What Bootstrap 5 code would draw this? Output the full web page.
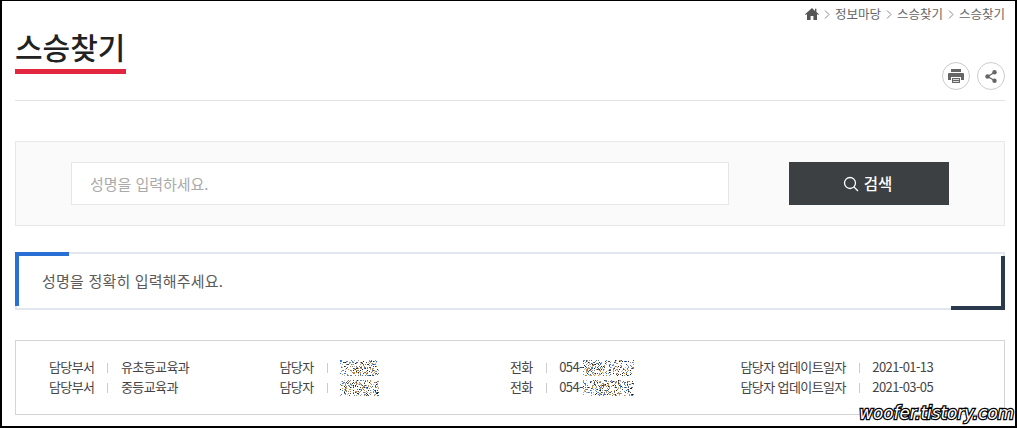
<!DOCTYPE html>
<html lang="ko">
<head>
<meta charset="utf-8">
<title>스승찾기</title>
<link href="https://cdn.jsdelivr.net/npm/bootstrap@5.3.0/dist/css/bootstrap.min.css" rel="stylesheet">
<style>
html,body{height:100%;overflow:hidden}
body{font-family:"Noto Sans CJK KR","Noto Sans",sans-serif;color:#444;background:#fff}
.frame{height:428px;border:solid #000;border-width:1px 2px 2px 2px;padding:0 10px 0 13px;position:relative;background:#fff}
.crumbs{height:25px;font-size:12.500px;color:#666;gap:5px;padding-top:1px}
.crumbs .sep{width:6px;height:9px}
.head{height:75px;border-bottom:1px solid #e3e3e3;margin-top:0}
.ttl{font-size:30px;font-weight:500;color:#222;line-height:40px;margin:0;padding-bottom:5px;width:111px;border-bottom:5px solid #e3263f;white-space:nowrap;height:48px}
.circ{width:28px;height:28px;border:1px solid #ccc;border-radius:50%;background:#fff;padding:0}
.tools{gap:7px;margin-top:36px}
.searchbox{margin-top:40px;height:85px;background:#fafafa;border:1px solid #e8e8e8;padding:20px 55px}
.nameinput{width:658px;height:43px;border:1px solid #e6e6e6;background:#fff;border-radius:0;padding:0 18px;font-size:15px;color:#333;box-shadow:none;letter-spacing:-.05px}
.nameinput::placeholder{color:#aaa;opacity:1}
.findbtn{width:160px;height:43px;background:#3c4043;color:#fff;border:0;border-radius:0;font-size:15.500px;font-weight:500;margin-left:60px;gap:5px;padding:0 3px 0 0}
.notice{margin-top:26px;height:58px;border:2px solid #e2e7ef;position:relative;padding-left:25px;font-size:15px;color:#5a5a5a;letter-spacing:.2px}
.cornerA{position:absolute;left:-2px;top:-2px;width:54px;height:54px;border-left:4px solid #2a6fd6;border-top:4px solid #2a6fd6}
.cornerB{position:absolute;right:-2px;bottom:-2px;width:54px;height:54px;border-right:4px solid #2a3a4c;border-bottom:4px solid #2a3a4c}
.infobox{margin-top:30px;height:75px;border:1px solid #d4d4d4;padding:16px 0 0 33px;font-size:13px;color:#444;letter-spacing:-.6px}
.inforow{height:20px;line-height:20px}
.cell{width:230.500px;white-space:nowrap}
.cell i{font-style:normal;display:inline-block;width:1px;height:10px;background:#ccc;margin:0 12.500px 0 13px;vertical-align:-1px}
.fuzz{display:inline-block;vertical-align:-4px}
.wm{position:absolute;right:1px;bottom:2px;font-family:"DejaVu Sans",sans-serif;font-style:italic;font-size:16.800px;font-weight:400;color:#fff;-webkit-text-stroke:2.500px #000;paint-order:stroke fill;line-height:22px}
</style>
</head>
<body>
<div class="frame">
  <nav class="crumbs d-flex align-items-center justify-content-end">
    <svg width="14" height="12" viewBox="0 0 14 12"><path fill="#555" d="M7 0 0 6.200l.8.9L2 6.100V12h3.600V8h2.800v4H12V6.100l1.200 1 .8-.9-2.600-2.300V.8H10v2.100z"/></svg>
    <svg class="sep" viewBox="0 0 6 9"><path d="M1 .5 5 4.500 1 8.500" fill="none" stroke="#888"/></svg>
    <span>정보마당</span>
    <svg class="sep" viewBox="0 0 6 9"><path d="M1 .5 5 4.500 1 8.500" fill="none" stroke="#888"/></svg>
    <span>스승찾기</span>
    <svg class="sep" viewBox="0 0 6 9"><path d="M1 .5 5 4.500 1 8.500" fill="none" stroke="#888"/></svg>
    <span>스승찾기</span>
  </nav>
  <div class="head d-flex justify-content-between align-items-start">
    <h1 class="ttl">스승찾기</h1>
    <div class="tools d-flex">
      <button class="circ d-flex align-items-center justify-content-center" aria-label="인쇄"><svg width="16" height="14" viewBox="0 0 16 14"><path fill="#666" d="M3 0h10v3H3zM1 4h14a1 1 0 0 1 1 1v6h-3V8H3v3H0V5a1 1 0 0 1 1-1zM4 9h8v5H4zm1 1.200v.8h6v-.8zm0 1.800v.8h6V12z" fill-rule="evenodd"/></svg></button>
      <button class="circ d-flex align-items-center justify-content-center" aria-label="공유"><svg width="12" height="13" viewBox="0 0 12 13"><path fill="none" stroke="#666" stroke-width="1.300" d="M9.500 2.500 2.500 6.500l7 4"/><circle cx="9.500" cy="2.300" r="2.200" fill="#666"/><circle cx="2.500" cy="6.500" r="2.200" fill="#666"/><circle cx="9.500" cy="10.700" r="2.200" fill="#666"/></svg></button>
    </div>
  </div>
  <div class="searchbox d-flex">
    <input class="form-control nameinput" type="text" placeholder="성명을 입력하세요.">
    <button class="btn findbtn d-flex align-items-center justify-content-center"><svg width="16" height="16" viewBox="0 0 16 16"><circle cx="7" cy="7" r="5.500" fill="none" stroke="#fff" stroke-width="1.300"/><path d="m11 11 4 4" stroke="#fff" stroke-width="1.300"/></svg>검색</button>
  </div>
  <div class="notice d-flex align-items-center">
    <span class="cornerA"></span><span class="cornerB"></span>
    성명을 정확히 입력해주세요.
  </div>
  <div class="infobox">
    <div class="inforow d-flex">
      <div class="cell">담당부서<i></i>유초등교육과</div>
      <div class="cell">담당자<i></i><span class="fuzz" data-w="39"></span></div>
      <div class="cell">전화<i></i>054-<span class="fuzz" data-w="51"></span></div>
      <div class="cell">담당자 업데이트일자<i></i>2021-01-13</div>
    </div>
    <div class="inforow d-flex">
      <div class="cell">담당부서<i></i>중등교육과</div>
      <div class="cell">담당자<i></i><span class="fuzz" data-w="39"></span></div>
      <div class="cell">전화<i></i>054-<span class="fuzz" data-w="51"></span></div>
      <div class="cell">담당자 업데이트일자<i></i>2021-03-05</div>
    </div>
  </div>
  <div class="wm">woofer.tistory.com</div>
</div>
<script src="https://cdn.jsdelivr.net/npm/bootstrap@5.3.0/dist/js/bootstrap.bundle.min.js"></script>
<script>
let seed=7;const rnd=()=>(seed=(seed*16807)%2147483647)/2147483647;
const cols=['#444','#777','#c08a4a','#4a86c0','#999','#222','#bbb','#d98a3a','#2a6fd6'];
document.querySelectorAll('.fuzz').forEach(el=>{
  const w=+el.dataset.w,h=16;let r='';
  for(let y=0;y<h;y++)for(let x=0;x<w;x++){if(rnd()<.32)r+=`<rect x="${x}" y="${y}" width="1" height="1" fill="${cols[Math.floor(rnd()*cols.length)]}"/>`;}
  el.innerHTML=`<svg width="${w}" height="${h}" style="display:block">${r}</svg>`;
});
</script>
</body>
</html>
